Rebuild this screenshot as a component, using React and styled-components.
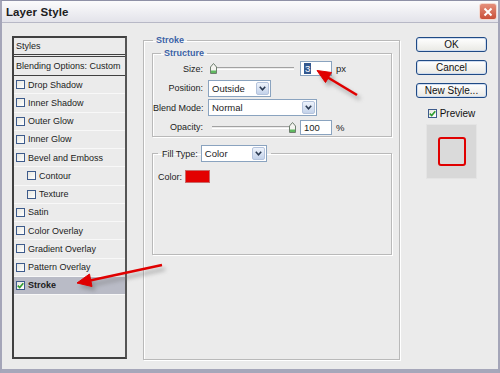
import React from 'react';
import styled, { createGlobalStyle } from 'styled-components';

const GlobalStyle = createGlobalStyle`
  html, body {
    margin: 0;
    padding: 0;
    background: #ebebeb;
  }
  body {
    font-family: "Liberation Sans", Arial, sans-serif;
    font-size: 9px;
    color: #1c1c1c;
  }
`;

const Window = styled.div`
  position: relative;
  width: 500px;
  height: 373px;
  box-sizing: border-box;
  background: #ebebeb;
  border-left: 2px solid #a4a5b8;
  border-right: 2px solid #a4a5b8;
  border-bottom: 4px solid #a6a7ba;
  border-top: 1px solid #8e90a6;
  display: flex;
  flex-direction: column;
  overflow: hidden;
`;

const TitleBar = styled.div`
  height: 22px;
  box-sizing: border-box;
  display: flex;
  align-items: center;
  justify-content: space-between;
  padding: 0 1px 0 4px;
  background: linear-gradient(#fbfbfc, #e3e3ea);
  border-bottom: 1px solid #b7b8c6;
`;

const Title = styled.span`
  font-size: 11.5px;
  font-weight: bold;
  color: #202020;
  letter-spacing: 0.1px;
`;

const CloseButton = styled.div`
  width: 18px;
  height: 17px;
  box-sizing: border-box;
  border-radius: 3px;
  border: 1px solid #f3d8d0;
  background: linear-gradient(#e58f7b, #c9503a);
  display: flex;
  align-items: center;
  justify-content: center;
`;

const Body = styled.div`
  flex: 1;
  display: flex;
  align-items: flex-start;
  padding: 13px 11px 0 10px;
`;

const StylePanel = styled.div`
  width: 115px;
  height: 323px;
  box-sizing: border-box;
  border: 2px solid #404040;
  border-right-color: #555;
  background: #ebebeb;
  display: flex;
  flex-direction: column;
`;

const PanelHeader = styled.div`
  display: flex;
  align-items: center;
  padding-left: 2px;
  border-bottom: 1px solid #404040;
  border-top: ${p => (p.boxed ? '1px solid #404040' : 'none')};
  margin-top: ${p => (p.boxed ? '1px' : '0')};
  height: ${p => (p.boxed ? '18px' : '16px')};
`;

const StyleRow = styled.div`
  height: 18.25px;
  box-sizing: border-box;
  display: flex;
  align-items: center;
  gap: 3px;
  padding-left: ${p => (p.indent ? '13px' : '2px')};
  border-bottom: 1px solid #f8f8f8;
  background: ${p => (p.active ? '#b9bbc6' : 'transparent')};
  font-weight: ${p => (p.active ? 'bold' : 'normal')};
`;

const Box = styled.span`
  width: 9px;
  height: 9px;
  box-sizing: border-box;
  border: 1px solid #3d5b8c;
  background: linear-gradient(135deg, #e6e6e0, #ffffff);
  display: inline-flex;
  align-items: center;
  justify-content: center;
  flex-shrink: 0;
`;

const Group = styled.fieldset`
  margin: 0;
  box-sizing: border-box;
  border: 1px solid #b9b9b9;
  box-shadow: inset 1px 1px 0 #fff, 1px 1px 0 #fff;
  min-width: 0;
`;

const StrokeGroup = styled(Group)`
  width: 257px;
  height: 325px;
  margin: -1px 16px 0 16px;
  padding: 3px 7px 0 8px;
`;

const StructureGroup = styled(Group)`
  height: 89px;
  padding: 2px 0 0 0;
  display: flex;
  flex-direction: column;
  gap: 2.5px;
`;

const FillGroup = styled(Group)`
  height: 110px;
  margin-top: 8px;
  padding: 0 0 0 5px;
`;

const Legend = styled.legend`
  color: #3b62a6;
  font-weight: bold;
  line-height: 10px;
  padding: 0 3px;
  margin-left: ${p => p.offset || 0}px;
`;

const FillLegend = styled.legend`
  padding: 0 4px;
  margin-left: 0;
`;

const LegendLine = styled.span`
  display: inline-flex;
  align-items: center;
  gap: 3px;
`;

const Row = styled.div`
  height: 17px;
  display: flex;
  align-items: center;
`;

const Label = styled.span`
  width: 50px;
  text-align: right;
  margin-right: 5px;
  white-space: nowrap;
`;

const SliderWrap = styled.div`
  position: relative;
  width: 88px;
  height: 17px;
  display: flex;
  align-items: center;
`;

const Track = styled.div`
  margin-left: 4px;
  width: 82px;
  height: 1px;
  border-top: 1px solid #a2a2a2;
  border-bottom: 1px solid #fff;
`;

const Thumb = styled.svg`
  position: absolute;
  top: 3px;
  left: ${p => (p.end ? '81px' : '2px')};
`;

const Input = styled.div`
  width: 32px;
  height: 15px;
  box-sizing: border-box;
  margin-left: 4px;
  border: 1px solid #8aa3bf;
  background: #fff;
  display: flex;
  align-items: center;
  padding-left: 3px;
  font-size: 9.5px;
`;

const Selected = styled.span`
  background: #33588f;
  color: #fff;
  padding: 0 1px;
  line-height: 11px;
`;

const Unit = styled.span`
  margin-left: 4px;
  font-size: 9.5px;
`;

const Select = styled.div`
  width: ${p => p.w}px;
  height: 17px;
  box-sizing: border-box;
  border: 1px solid #8aa3bf;
  background: #fff;
  display: flex;
  align-items: center;
  padding: 1px 1px 1px 3px;
  font-size: 9.5px;
  font-weight: normal;
  color: #1c1c1c;
`;

const SelectText = styled.span`
  flex: 1;
`;

const DropButton = styled.div`
  width: 13px;
  height: 13px;
  box-sizing: border-box;
  border: 1px solid #b4c3dc;
  border-radius: 2px;
  background: linear-gradient(#eef3fb, #c3d2ea);
  display: flex;
  align-items: center;
  justify-content: center;
`;

const ColorRow = styled.div`
  margin-top: 8px;
  display: flex;
  align-items: center;
  gap: 3px;
`;

const Swatch = styled.div`
  width: 25px;
  height: 13px;
  box-sizing: border-box;
  background: #e30000;
  border: 1px solid #c86a6a;
`;

const Side = styled.div`
  width: 71px;
  margin-top: 1px;
  display: flex;
  flex-direction: column;
  align-items: center;
`;

const Button = styled.div`
  width: 71px;
  height: 15px;
  box-sizing: border-box;
  margin-bottom: 8px;
  border: 1px solid #1f4a85;
  border-radius: 3px;
  background: linear-gradient(#ffffff, #e9e9e4);
  box-shadow: inset 0 0 0 1px #cfdcef;
  display: flex;
  align-items: center;
  justify-content: center;
  font-size: 10px;
  color: #111;
`;

const PreviewToggle = styled.div`
  display: flex;
  align-items: center;
  gap: 3px;
  height: 14px;
  font-size: 10px;
  color: #111;
`;

const PreviewBox = styled.div`
  width: 51px;
  height: 55px;
  margin-top: 4px;
  box-sizing: border-box;
  border: 1px solid #e4e4e4;
  background: #d8d8d8;
  display: flex;
  align-items: center;
  justify-content: center;
`;

const PreviewShape = styled.div`
  width: 28px;
  height: 29px;
  box-sizing: border-box;
  border: 2px solid #e00000;
  border-radius: 3px;
  background: #dadada;
`;

const Overlay = styled.svg`
  position: absolute;
  left: -2px;
  top: -1px;
  pointer-events: none;
`;

const Check = () => (
  <svg width="7" height="7" viewBox="0 0 7 7">
    <path d="M0.8 3.6 L2.7 5.6 L6.3 1.2" fill="none" stroke="#2f9d2f" strokeWidth="1.6" />
  </svg>
);

const Chevron = () => (
  <svg width="7" height="5" viewBox="0 0 7 5">
    <path d="M0.8 0.8 L3.5 3.8 L6.2 0.8" fill="none" stroke="#2b3a52" strokeWidth="1.6" />
  </svg>
);

const SliderThumb = ({ end }) => (
  <Thumb end={end} width="7" height="11" viewBox="0 0 7 11">
    <path d="M0.5 4 L3.5 0.5 L6.5 4 L6.5 10.5 L0.5 10.5 Z" fill="#f4f4f0" stroke="#6f7f6f" />
    <rect x="1" y="7.5" width="5" height="2.5" fill="#5fb85f" />
  </Thumb>
);

const Slider = ({ end }) => (
  <SliderWrap>
    <Track />
    <SliderThumb end={end} />
  </SliderWrap>
);

const styleItems = [
  { name: 'Drop Shadow' },
  { name: 'Inner Shadow' },
  { name: 'Outer Glow' },
  { name: 'Inner Glow' },
  { name: 'Bevel and Emboss' },
  { name: 'Contour', indent: true },
  { name: 'Texture', indent: true },
  { name: 'Satin' },
  { name: 'Color Overlay' },
  { name: 'Gradient Overlay' },
  { name: 'Pattern Overlay' },
  { name: 'Stroke', active: true },
];

const App = () => (
  <>
    <GlobalStyle />
    <Window>
      <TitleBar>
        <Title>Layer Style</Title>
        <CloseButton>
          <svg width="10" height="10" viewBox="0 0 10 10">
            <path d="M1.5 1.5 L8.5 8.5 M8.5 1.5 L1.5 8.5" stroke="#fff" strokeWidth="2" />
          </svg>
        </CloseButton>
      </TitleBar>
      <Body>
        <StylePanel>
          <PanelHeader>Styles</PanelHeader>
          <PanelHeader boxed>Blending Options: Custom</PanelHeader>
          {styleItems.map(item => (
            <StyleRow key={item.name} indent={item.indent} active={item.active}>
              <Box>{item.active && <Check />}</Box>
              {item.name}
            </StyleRow>
          ))}
        </StylePanel>

        <StrokeGroup>
          <Legend offset={1}>Stroke</Legend>
          <StructureGroup>
            <Legend offset={8}>Structure</Legend>
            <Row>
              <Label>Size:</Label>
              <Slider />
              <Input><Selected>3</Selected></Input>
              <Unit>px</Unit>
            </Row>
            <Row>
              <Label>Position:</Label>
              <Select w={63}>
                <SelectText>Outside</SelectText>
                <DropButton><Chevron /></DropButton>
              </Select>
            </Row>
            <Row>
              <Label>Blend Mode:</Label>
              <Select w={109}>
                <SelectText>Normal</SelectText>
                <DropButton><Chevron /></DropButton>
              </Select>
            </Row>
            <Row>
              <Label>Opacity:</Label>
              <Slider end />
              <Input>100</Input>
              <Unit>%</Unit>
            </Row>
          </StructureGroup>

          <FillGroup>
            <FillLegend>
              <LegendLine>
                Fill Type:
                <Select w={66}>
                  <SelectText>Color</SelectText>
                  <DropButton><Chevron /></DropButton>
                </Select>
              </LegendLine>
            </FillLegend>
            <ColorRow>
              Color:
              <Swatch />
            </ColorRow>
          </FillGroup>
        </StrokeGroup>

        <Side>
          <Button>OK</Button>
          <Button>Cancel</Button>
          <Button>New Style...</Button>
          <PreviewToggle>
            <Box><Check /></Box>
            Preview
          </PreviewToggle>
          <PreviewBox>
            <PreviewShape />
          </PreviewBox>
        </Side>
      </Body>

      <Overlay width="500" height="373" viewBox="0 0 500 373">
        <defs>
          <filter id="blur" x="-20%" y="-50%" width="140%" height="200%">
            <feGaussianBlur stdDeviation="2" />
          </filter>
        </defs>
        <g transform="translate(3 4)" fill="#777" stroke="#777" opacity="0.55" filter="url(#blur)">
          <line x1="357" y1="95" x2="327" y2="77" strokeWidth="3" />
          <polygon points="317,70.5 331.5,72.5 325.5,82.5" />
          <line x1="162" y1="265" x2="90" y2="280.5" strokeWidth="3" />
          <polygon points="77,283 89.5,274 92,286.5" />
        </g>
        <g fill="#e00000" stroke="#e00000">
          <line x1="357" y1="95" x2="327" y2="77" strokeWidth="2.6" />
          <polygon points="317,70.5 331.5,72.5 325.5,82.5" />
          <line x1="162" y1="265" x2="90" y2="280.5" strokeWidth="2.6" />
          <polygon points="77,283 89.5,274 92,286.5" />
        </g>
      </Overlay>
    </Window>
  </>
);

export default App;
